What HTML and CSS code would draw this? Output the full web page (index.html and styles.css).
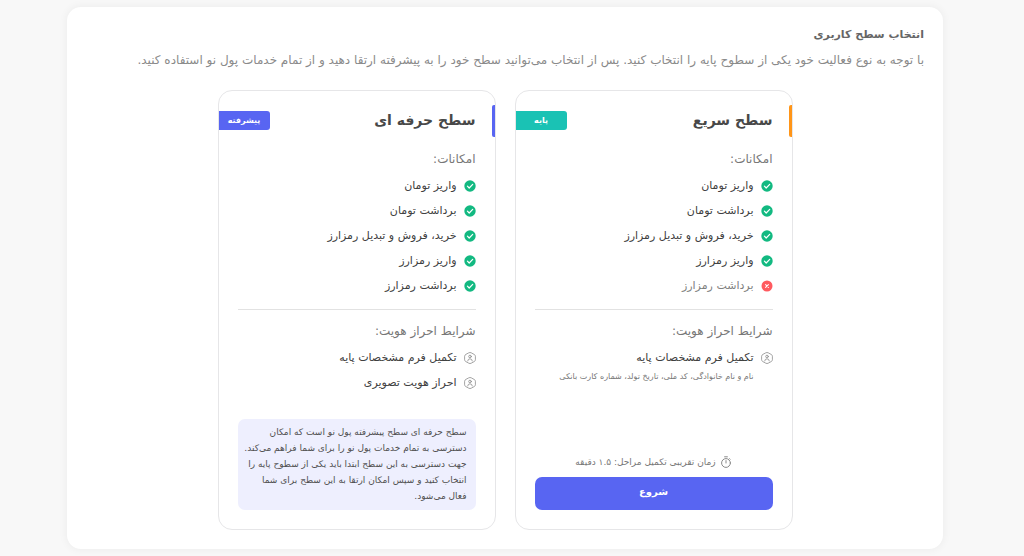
FILE: index.html
```html
<!DOCTYPE html>
<html lang="fa" dir="rtl">
<head>
<meta charset="utf-8">
<meta name="viewport" content="width=device-width, initial-scale=1">
<title>انتخاب سطح کاربری</title>
<link rel="stylesheet" href="styles.css">
</head>
<body>
<svg class="sprite" aria-hidden="true">
  <symbol id="check" viewBox="0 0 12 12"><circle cx="6" cy="6" r="5.7" fill="#12b981"/><path d="M3.4 6.2 5.2 8 8.7 4.4" fill="none" stroke="#fff" stroke-width="1.2" stroke-linecap="round" stroke-linejoin="round"/></symbol>
  <symbol id="cross" viewBox="0 0 12 12"><circle cx="6" cy="6" r="5.5" fill="#ff5a5f"/><path d="M4.6 4.6 7.4 7.4M7.4 4.6 4.6 7.4" stroke="#fff" stroke-width="1.1" stroke-linecap="round"/></symbol>
  <symbol id="person" viewBox="0 0 12 12"><g fill="none" stroke="#8c8c8c" stroke-width=".8" stroke-linejoin="round" stroke-linecap="round"><path d="M4.8.8Q6 .1 7.2.8L10.3 2.5Q11.4 3.1 11.4 4.3V7.7Q11.4 8.9 10.3 9.5L7.2 11.2Q6 11.9 4.8 11.2L1.7 9.5Q.6 8.9.6 7.7V4.3Q.6 3.1 1.7 2.5Z"/><circle cx="6" cy="4.5" r="1.3"/><path d="M3.7 8.9Q3.9 6.8 6 6.8T8.3 8.9"/></g></symbol>
  <symbol id="timer" viewBox="0 0 12 12"><g fill="none" stroke="#8a8a8a" stroke-linecap="round"><circle cx="6" cy="7" r="4.4"/><path d="M4.6.8H7.4M6 4.6V7M9.5 2.6 10.1 3.2"/></g></symbol>
</svg>
<main class="panel">
  <header class="intro">
    <h1 class="intro-title">انتخاب سطح کاربری</h1>
    <p class="intro-text">با توجه به نوع فعالیت خود یکی از سطوح پایه را انتخاب کنید. پس از انتخاب می‌توانید سطح خود را به پیشرفته ارتقا دهید و از تمام خدمات پول نو استفاده کنید.</p>
  </header>
  <div class="levels">
    <section class="card card-fast">
      <div class="card-head"><h2 class="card-title">سطح سریع</h2><span class="tag">پایه</span></div>
      <h3 class="subhead">امکانات:</h3>
      <ul class="list">
        <li class="item"><svg class="icon"><use href="#check"/></svg>واریز تومان</li>
        <li class="item"><svg class="icon"><use href="#check"/></svg>برداشت تومان</li>
        <li class="item"><svg class="icon"><use href="#check"/></svg>خرید، فروش و تبدیل رمزارز</li>
        <li class="item"><svg class="icon"><use href="#check"/></svg>واریز رمزارز</li>
        <li class="item item-off"><svg class="icon"><use href="#cross"/></svg>برداشت رمزارز</li>
      </ul>
      <hr class="divider">
      <h3 class="subhead">شرایط احراز هویت:</h3>
      <ul class="list">
        <li class="item"><svg class="icon"><use href="#person"/></svg>تکمیل فرم مشخصات پایه</li>
      </ul>
      <p class="hint">نام و نام خانوادگی، کد ملی، تاریخ تولد، شماره کارت بانکی</p>
      <div class="card-foot">
        <p class="duration"><svg class="icon"><use href="#timer"/></svg>زمان تقریبی تکمیل مراحل: ۱.۵ دقیقه</p>
        <button class="start" type="button">شروع</button>
      </div>
    </section>
    <section class="card card-pro">
      <div class="card-head"><h2 class="card-title">سطح حرفه ای</h2><span class="tag">پیشرفته</span></div>
      <h3 class="subhead">امکانات:</h3>
      <ul class="list">
        <li class="item"><svg class="icon"><use href="#check"/></svg>واریز تومان</li>
        <li class="item"><svg class="icon"><use href="#check"/></svg>برداشت تومان</li>
        <li class="item"><svg class="icon"><use href="#check"/></svg>خرید، فروش و تبدیل رمزارز</li>
        <li class="item"><svg class="icon"><use href="#check"/></svg>واریز رمزارز</li>
        <li class="item"><svg class="icon"><use href="#check"/></svg>برداشت رمزارز</li>
      </ul>
      <hr class="divider">
      <h3 class="subhead">شرایط احراز هویت:</h3>
      <ul class="list">
        <li class="item"><svg class="icon"><use href="#person"/></svg>تکمیل فرم مشخصات پایه</li>
        <li class="item"><svg class="icon"><use href="#person"/></svg>احراز هویت تصویری</li>
      </ul>
      <div class="card-foot">
        <p class="note">سطح حرفه ای سطح پیشرفته پول نو است که امکان<br>دسترسی به تمام خدمات پول نو را برای شما فراهم می‌کند.<br>جهت دسترسی به این سطح ابتدا باید یکی از سطوح پایه را<br>انتخاب کنید و سپس امکان ارتقا به این سطح برای شما<br>فعال می‌شود.</p>
      </div>
    </section>
  </div>
</main>
</body>
</html>
```

FILE: styles.css
```css
* { box-sizing: border-box; }
h1, h2, h3, p, ul { margin: 0; padding: 0; }
body {
  margin: 0;
  padding: 7px 81px 7px 67px;
  background: #f8f8f8;
  font-family: "DejaVu Sans", sans-serif;
  color: #404040;
}
.sprite { position: absolute; width: 0; height: 0; }
.panel {
  padding: 17px 19px 19px;
  background: #fff;
  border-radius: 14px;
  box-shadow: 0 0 10px rgba(0, 0, 0, .06);
}
.intro-title { font-size: 11px; line-height: 22px; color: #666; }
.intro-text { font-size: 12px; line-height: 28px; color: #8a8a8a; }
.levels {
  display: flex;
  justify-content: center;
  gap: 19px;
  margin-top: 16px;
}
.card {
  --accent: #ff9518;
  --tag: #1ac2b4;
  position: relative;
  display: flex;
  flex-direction: column;
  flex: 0 1 278px;
  min-width: 0;
  min-height: 440px;
  padding: 14px 19px 19px;
  border: 1px solid #e6e6e8;
  border-radius: 14px;
}
.card-pro { --accent: #5865f2; --tag: #5865f2; }
.card::before {
  content: "";
  position: absolute;
  top: 14px;
  right: 0;
  width: 3px;
  height: 32px;
  border-radius: 2px 0 0 2px;
  background: var(--accent);
}
.card-head {
  display: flex;
  justify-content: space-between;
  align-items: center;
  margin-left: -19px;
  height: 30px;
}
.card-title { font-size: 14px; line-height: 28px; color: #484848; }
.tag {
  width: 51px;
  border-radius: 0 3px 3px 0;
  background: var(--tag);
  color: #fff;
  font-size: 8px;
  font-weight: bold;
  line-height: 19px;
  text-align: center;
}
.subhead {
  margin: 14px 0 8px;
  font-size: 12px;
  font-weight: normal;
  line-height: 20px;
  color: #777;
}
.list { display: grid; gap: 8px; list-style: none; }
.item {
  display: flex;
  align-items: center;
  gap: 7px;
  font-size: 11px;
  line-height: 17px;
}
.item-off { color: #808080; }
.icon { flex: none; width: 12px; height: 12px; }
.divider {
  width: 100%;
  margin: 15px 0 0;
  border: 0;
  border-top: 1px solid #e2e2e2;
}
.divider + .subhead { margin-top: 11px; }
.hint { padding-right: 19px; font-size: 8px; line-height: 22px; color: #777; white-space: nowrap; }
.card-foot { margin-top: auto; }
.duration {
  display: flex;
  justify-content: center;
  align-items: center;
  gap: 4px;
  margin-bottom: 6px;
  font-size: 9px;
  line-height: 18px;
  color: #777;
}
.start {
  display: block;
  width: 100%;
  height: 33px;
  padding: 0 0 4px;
  border: 0;
  border-radius: 7px;
  background: #5865f2;
  color: #fff;
  font: bold 10px "DejaVu Sans", sans-serif;
}
.note {
  padding: 5px 9px 6px 5px;
  border-radius: 7px;
  background: #eeeffe;
  font-size: 9px;
  line-height: 16px;
  color: #505050;
  white-space: nowrap;
}
```
